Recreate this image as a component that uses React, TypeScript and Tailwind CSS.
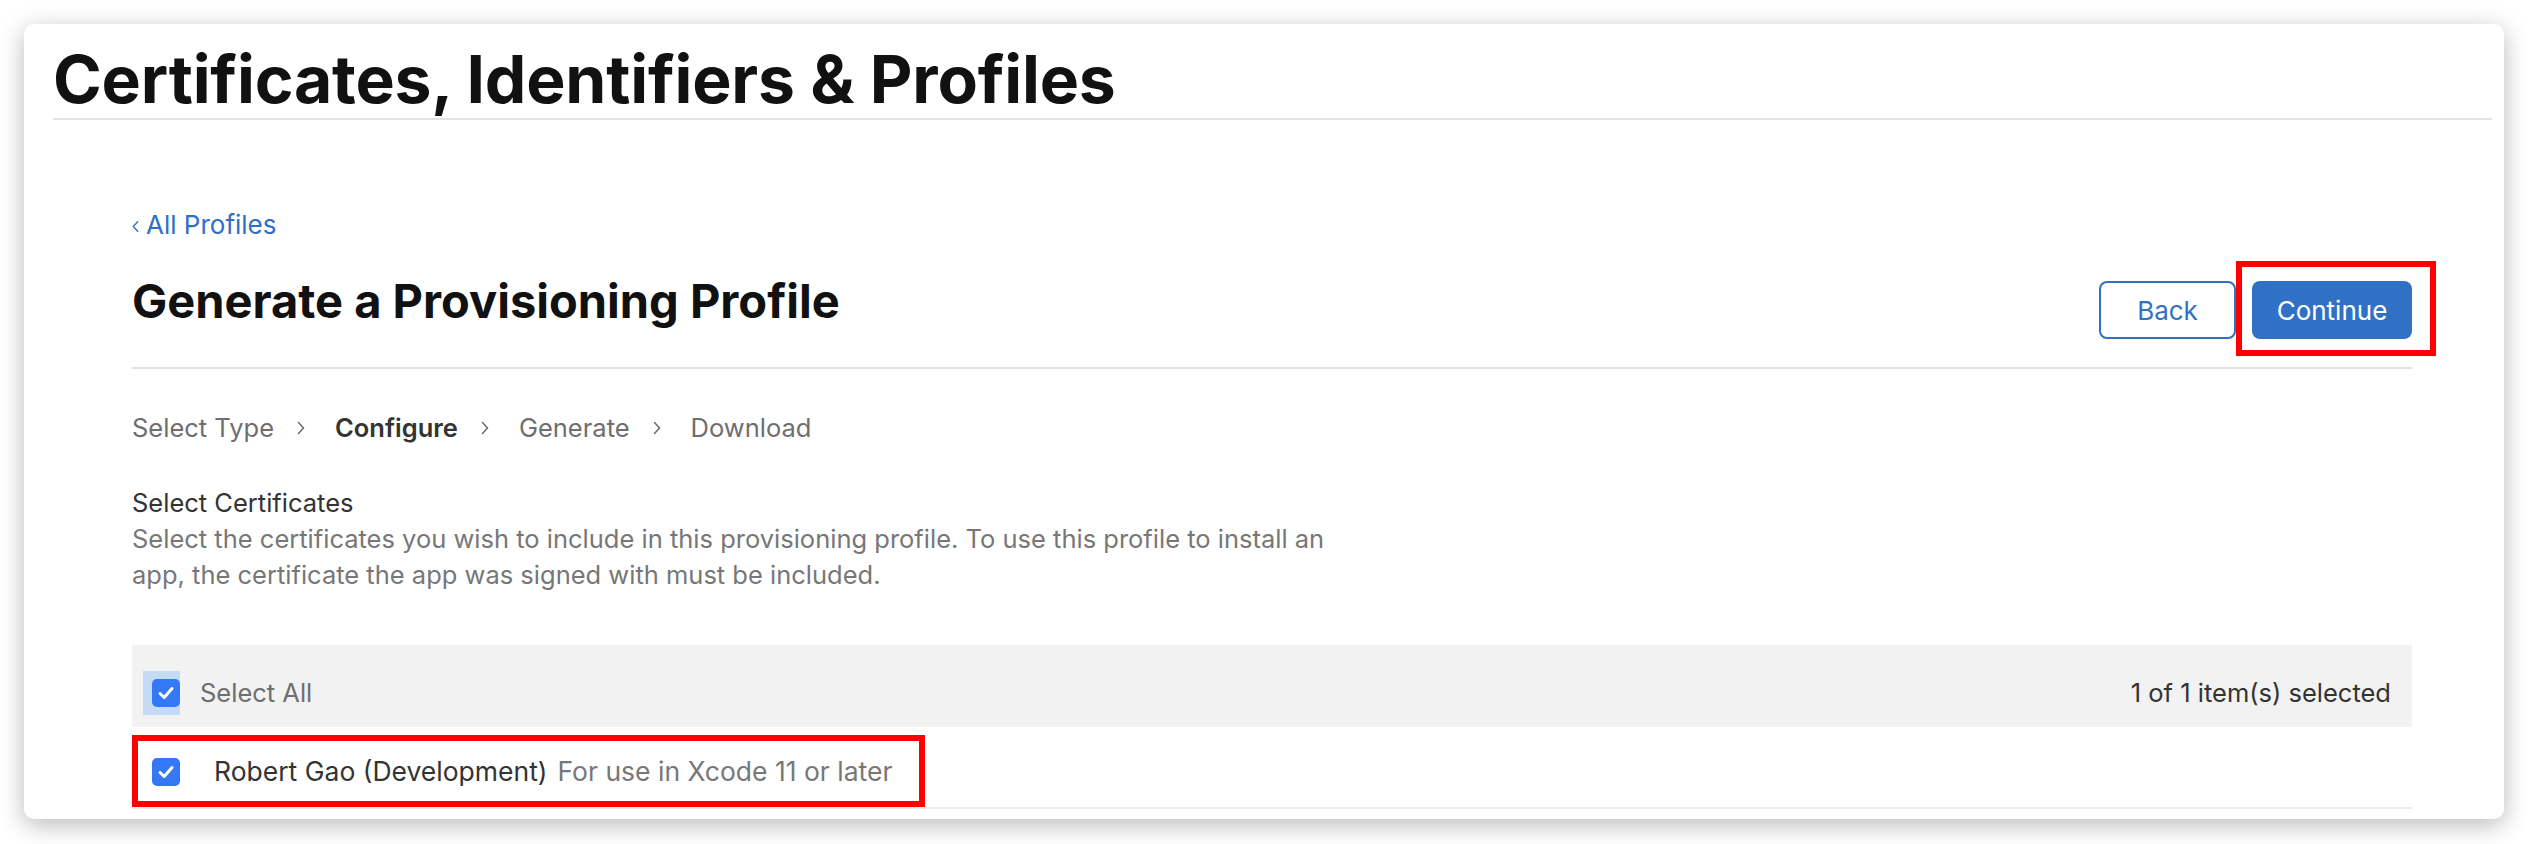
import React from "react";

const font = { fontFamily: "Inter, 'Noto Sans', sans-serif" };

function Chevron({ dir = "right", className = "" }: { dir?: "left" | "right"; className?: string }) {
  return (
    <svg viewBox="0 0 8 14" className={className} fill="none" stroke="currentColor" strokeWidth={1.6} strokeLinecap="round" strokeLinejoin="round">
      {dir === "right" ? <polyline points="1.5,1.5 6.5,7 1.5,12.5" /> : <polyline points="6.5,1.5 1.5,7 6.5,12.5" />}
    </svg>
  );
}

function Checkbox() {
  return (
    <div className="w-[28px] h-[28px] rounded-[5px] bg-[#3478f6] flex items-center justify-center">
      <svg viewBox="0 0 20 20" className="w-[20px] h-[20px]" fill="none" stroke="white" strokeWidth={3} strokeLinecap="round" strokeLinejoin="round">
        <polyline points="4,10.5 8.2,14.5 16,5.5" />
      </svg>
    </div>
  );
}

const steps = [
  { label: "Select Type", active: false },
  { label: "Configure", active: true },
  { label: "Generate", active: false },
  { label: "Download", active: false },
];

export default function App() {
  return (
    <div className="w-[2528px] h-[844px] bg-white pt-[24px] pl-[24px]" style={font}>
      <div className="w-[2480px] h-[795px] bg-white rounded-[10px] shadow-[0_6px_24px_rgba(0,0,0,0.28)] overflow-hidden">
        {/* page title */}
        <div className="ml-[29px] mr-[12px] pt-[19px] pb-[3px] border-b-2 border-[#e2e2e2]">
          <h1 className="text-[66px] leading-[72px] font-bold text-[#111] tracking-[-0.2px]">Certificates, Identifiers &amp; Profiles</h1>
        </div>

        <div className="ml-[108px] mr-[92px]">
          <a className="mt-[89px] flex items-center gap-[7px] text-[#2e6fc8] text-[26px] leading-[32px]">
            <Chevron dir="left" className="w-[7px] h-[13px] mt-[2px]" />
            All Profiles
          </a>

          <div className="mt-[32px] flex justify-between items-start pb-[28px] border-b-2 border-[#e2e2e2]">
            <h2 className="text-[47px] leading-[56px] font-bold text-[#111]">Generate a Provisioning Profile</h2>
            <div className="mt-[8px] flex gap-[16px]">
              <button className="w-[137px] h-[58px] rounded-[8px] border-2 border-[#3171c5] text-[#3171c5] text-[26px] bg-white">Back</button>
              <div className="relative">
                <button className="w-[160px] h-[58px] rounded-[8px] bg-[#3171c5] text-white text-[26px]">Continue</button>
                <div className="absolute -left-[16px] -right-[24px] -top-[20px] -bottom-[17px] border-[6px] border-[#ff0000]" />
              </div>
            </div>
          </div>

          <div className="mt-[43px] flex items-center text-[25.5px] leading-[32px] text-[#6e6e6e]">
            {steps.map((s, i) => (
              <React.Fragment key={s.label}>
                <span className={s.active ? "font-semibold text-[#333]" : ""}>{s.label}</span>
                {i < steps.length - 1 && <Chevron className="w-[8px] h-[14px] ml-[23px] mr-[30px]" />}
              </React.Fragment>
            ))}
          </div>

          <div className="mt-[41px] text-[25.5px] leading-[36px] text-[#333]">Select Certificates</div>
          <p className="w-[1240px] text-[25.5px] leading-[36px] text-[#777]">
            Select the certificates you wish to include in this provisioning profile. To use this profile to install an app, the certificate the app was signed with must be included.
          </p>

          <div className="mt-[52px] h-[82px] pt-[14px] bg-[#f2f2f2] flex items-center justify-between pr-[21px]">
            <div className="flex items-center">
              <div className="ml-[11px] pl-[9px] py-[8px] bg-[#c4dbf5]">
                <Checkbox />
              </div>
              <span className="ml-[20px] text-[25.5px] text-[#6e6e6e]">Select All</span>
            </div>
            <span className="text-[25.5px] text-[#333]">1 of 1 item(s) selected</span>
          </div>

          <div className="relative mt-[2px] h-[80px] pt-[8px] border-b-2 border-[#ebebeb] flex items-center pl-[20px]">
            <Checkbox />
            <span className="ml-[34px] text-[26.5px] text-[#333]">Robert Gao (Development)</span>
            <span className="ml-[10px] text-[26.5px] text-[#777]">For use in Xcode 11 or later</span>
            <div className="absolute left-0 top-[6px] w-[793px] bottom-0 border-[6px] border-[#ff0000]" />
          </div>
        </div>
      </div>
    </div>
  );
}
